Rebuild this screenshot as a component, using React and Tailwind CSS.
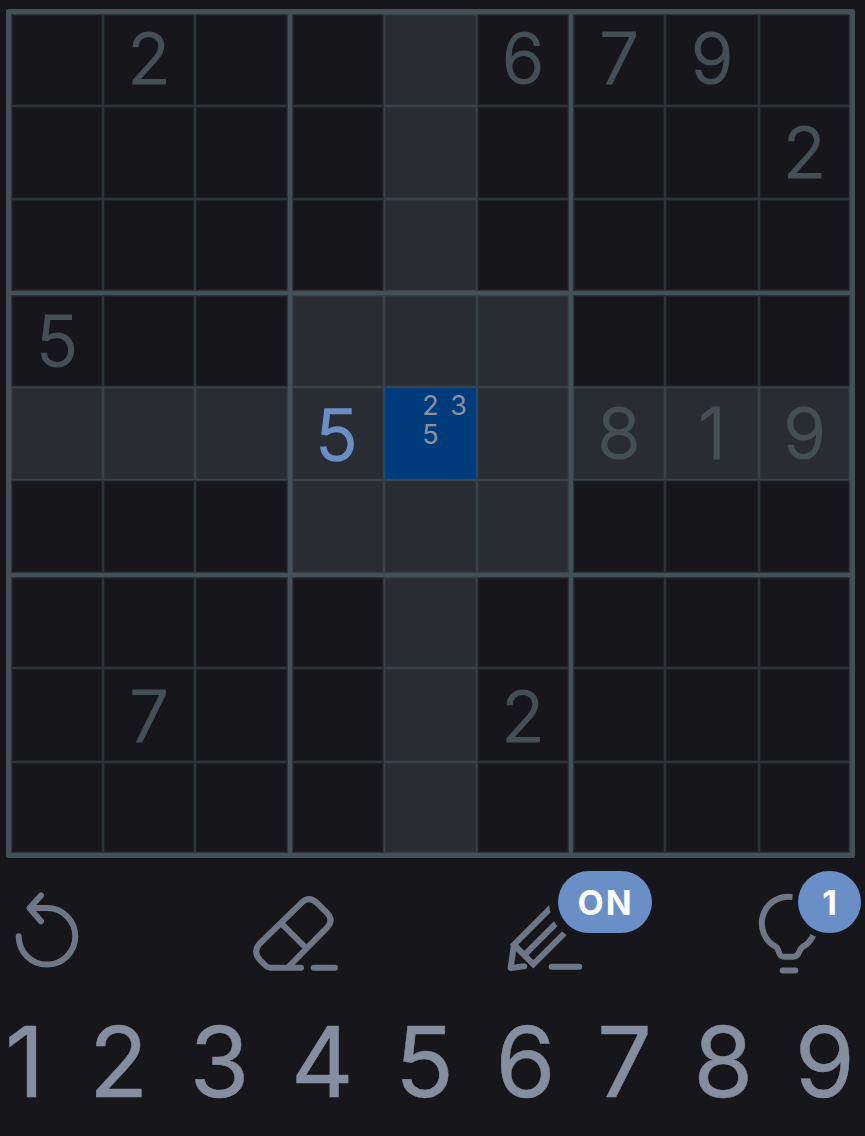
import React from 'react';
import clsx from 'clsx';

const GIVEN = [
  '.2...679.',
  '........2',
  '.........',
  '5........',
  '......819',
  '.........',
  '.........',
  '.7...2...',
  '.........',
];

const SELECTED = { row: 4, col: 4 };
const NOTES = [2, 3, 5];

const box = (n) => Math.floor(n / 3);

function Notes() {
  return (
    <div className="grid grid-cols-[28px_28px_28px] grid-rows-[29px_29px_29px] pt-[2px] text-[27px] leading-none text-[#8b919d]">
      {[1, 2, 3, 4, 5, 6, 7, 8, 9].map((n) => (
        <span key={n} className="flex items-center justify-center">
          {NOTES.includes(n) ? n : ''}
        </span>
      ))}
    </div>
  );
}

function Cell({ row, col }) {
  const selected = row === SELECTED.row && col === SELECTED.col;
  const related =
    row === SELECTED.row ||
    col === SELECTED.col ||
    (box(row) === box(SELECTED.row) && box(col) === box(SELECTED.col));
  const given = GIVEN[row][col];
  const entered = row === 4 && col === 3;
  return (
    <div
      className={clsx(
        'flex items-center justify-center border-[#435057] text-[71px] leading-none shadow-[inset_0_0_0_1px_rgba(84,104,112,0.3),inset_0_0_0_2px_rgba(84,104,112,0.12)]',
        (col === 2 || col === 5) && 'border-r-4',
        (row === 2 || row === 5) && 'border-b-4',
        row === 0 && 'pb-[4px]',
        row === 7 && 'pt-[3px]',
        selected ? 'bg-[#003b7b]' : related ? 'bg-[#2a2c34]' : 'bg-[#17161b]',
        entered ? 'pt-[3px] pr-[3px] text-[#6a8fc7]' : 'text-[#454f56]'
      )}
    >
      {selected && <Notes />}
      {entered && <span className="font-light [-webkit-text-stroke:1.6px_#6a8fc7]">5</span>}
      {given !== '.' && (
        <span className="font-light [-webkit-text-stroke:1.2px_#454f56]">{given}</span>
      )}
    </div>
  );
}

function Icon({ children }) {
  return (
    <svg
      viewBox="0 0 96 96"
      className="block size-24 fill-none stroke-[#6f7787] stroke-6"
      strokeLinecap="round"
      strokeLinejoin="round"
    >
      {children}
    </svg>
  );
}

function Toolbar() {
  return (
    <div className="mt-[26px] flex gap-[151px] pl-[3px]">
      <button aria-label="Undo">
        <Icon>
          <path d="M15.7 52.3A28.3 28.3 0 1 0 44 24H27" />
          <path d="M38 11.5L26.5 24L38 37.2" />
        </Icon>
      </button>
      <button aria-label="Erase">
        <Icon>
          <path d="M51 83.7H20Q17.6 83.6 16 82L10 76Q2.6 68 9.3 60L52 18.3Q59.3 11.7 66.7 18.7L76.7 28.7Q84 36 77.3 43.3L38.3 83" />
          <path d="M31.3 39.3L56 64" />
          <path d="M63.7 83.7H85" />
        </Icon>
      </button>
      <button aria-label="Notes" className="relative">
        <Icon>
          <path d="M60 17.7L17 60.7L36.3 80.3L72 44.6" strokeLinejoin="miter" />
          <path d="M28 70.3L66 32.3" />
          <path d="M17 60.7L13.6 84L27.3 82.3" />
          <path d="M54.7 82.8H82.3" />
        </Icon>
        <span className="absolute top-[-13px] left-[61px] flex h-[62px] w-[94px] items-center justify-center rounded-full bg-[#6a8fc7] text-[34px] leading-none font-bold tracking-[2px] text-white ring-9 ring-[#17161b]">
          <span className="pt-[2px] pl-px">ON</span>
        </span>
      </button>
      <button aria-label="Hint" className="relative">
        <Icon>
          <path d="M71 38.7A26.6 26.6 0 1 0 32 62.8C36 65 33 72.7 40.3 72.7H49.3C56 72.7 54 66 58.5 63Q66 59 69.7 50.5" />
          <path d="M38.7 86.4H51.3" />
        </Icon>
        <span className="absolute top-[-13px] left-[54px] flex h-[62px] w-[63px] items-center justify-center rounded-full bg-[#6a8fc7] text-[34px] leading-none font-bold text-white ring-6 ring-[#17161b]">
          <span className="pt-[2px]">1</span>
        </span>
      </button>
    </div>
  );
}

export default function App() {
  const rows = [0, 1, 2, 3, 4, 5, 6, 7, 8];
  return (
    <div className="h-[1136px] w-[865px] overflow-hidden bg-[#17161b] pt-[9px] font-['Inter',sans-serif]">
      <div className="ml-[6px] grid h-[849px] w-[849px] grid-cols-[92px_92px_97px_92px_93px_96px_92px_94px_91px] grid-rows-[92px_93px_96px_92px_93px_97px_91px_94px_91px] rounded-[2px] border-5 border-[#435057]">
        {rows.map((r) => rows.map((c) => <Cell key={`${r}-${c}`} row={r} col={c} />))}
      </div>
      <Toolbar />
      <div className="mt-[31px] flex h-[100px] items-center justify-between pr-[10px] pl-[5px] text-[97px] leading-none text-[#848e9e] [-webkit-text-stroke:0.5px_#848e9e]">
        {[1, 2, 3, 4, 5, 6, 7, 8, 9].map((n) => (
          <button key={n} className="first:pr-[3px]">
            {n}
          </button>
        ))}
      </div>
    </div>
  );
}
